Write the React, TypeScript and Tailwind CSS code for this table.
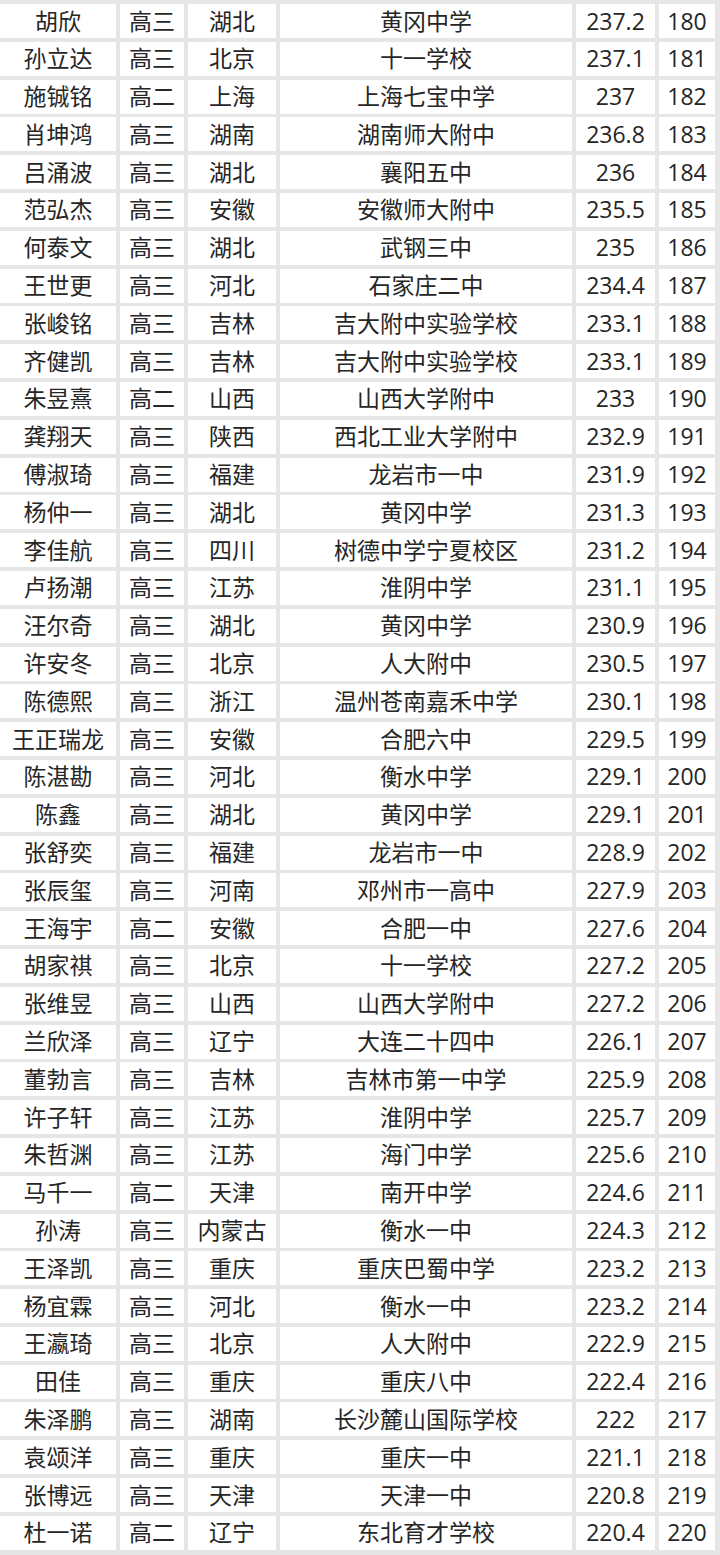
import React from 'react';

const rows: [string, string, string, string, string, number][] = [
  ['胡欣', '高三', '湖北', '黄冈中学', '237.2', 180],
  ['孙立达', '高三', '北京', '十一学校', '237.1', 181],
  ['施铖铭', '高二', '上海', '上海七宝中学', '237', 182],
  ['肖坤鸿', '高三', '湖南', '湖南师大附中', '236.8', 183],
  ['吕涌波', '高三', '湖北', '襄阳五中', '236', 184],
  ['范弘杰', '高三', '安徽', '安徽师大附中', '235.5', 185],
  ['何泰文', '高三', '湖北', '武钢三中', '235', 186],
  ['王世更', '高三', '河北', '石家庄二中', '234.4', 187],
  ['张峻铭', '高三', '吉林', '吉大附中实验学校', '233.1', 188],
  ['齐健凯', '高三', '吉林', '吉大附中实验学校', '233.1', 189],
  ['朱昱熹', '高二', '山西', '山西大学附中', '233', 190],
  ['龚翔天', '高三', '陕西', '西北工业大学附中', '232.9', 191],
  ['傅淑琦', '高三', '福建', '龙岩市一中', '231.9', 192],
  ['杨仲一', '高三', '湖北', '黄冈中学', '231.3', 193],
  ['李佳航', '高三', '四川', '树德中学宁夏校区', '231.2', 194],
  ['卢扬潮', '高三', '江苏', '淮阴中学', '231.1', 195],
  ['汪尔奇', '高三', '湖北', '黄冈中学', '230.9', 196],
  ['许安冬', '高三', '北京', '人大附中', '230.5', 197],
  ['陈德熙', '高三', '浙江', '温州苍南嘉禾中学', '230.1', 198],
  ['王正瑞龙', '高三', '安徽', '合肥六中', '229.5', 199],
  ['陈湛勘', '高三', '河北', '衡水中学', '229.1', 200],
  ['陈鑫', '高三', '湖北', '黄冈中学', '229.1', 201],
  ['张舒奕', '高三', '福建', '龙岩市一中', '228.9', 202],
  ['张辰玺', '高三', '河南', '邓州市一高中', '227.9', 203],
  ['王海宇', '高二', '安徽', '合肥一中', '227.6', 204],
  ['胡家祺', '高三', '北京', '十一学校', '227.2', 205],
  ['张维昱', '高三', '山西', '山西大学附中', '227.2', 206],
  ['兰欣泽', '高三', '辽宁', '大连二十四中', '226.1', 207],
  ['董勃言', '高三', '吉林', '吉林市第一中学', '225.9', 208],
  ['许子轩', '高三', '江苏', '淮阴中学', '225.7', 209],
  ['朱哲渊', '高三', '江苏', '海门中学', '225.6', 210],
  ['马千一', '高二', '天津', '南开中学', '224.6', 211],
  ['孙涛', '高三', '内蒙古', '衡水一中', '224.3', 212],
  ['王泽凯', '高三', '重庆', '重庆巴蜀中学', '223.2', 213],
  ['杨宜霖', '高三', '河北', '衡水一中', '223.2', 214],
  ['王瀛琦', '高三', '北京', '人大附中', '222.9', 215],
  ['田佳', '高三', '重庆', '重庆八中', '222.4', 216],
  ['朱泽鹏', '高三', '湖南', '长沙麓山国际学校', '222', 217],
  ['袁颂洋', '高三', '重庆', '重庆一中', '221.1', 218],
  ['张博远', '高三', '天津', '天津一中', '220.8', 219],
  ['杜一诺', '高二', '辽宁', '东北育才学校', '220.4', 220],
];

const cell =
  "h-[34px] bg-white flex items-center justify-center text-[23px] leading-none text-[#262626]";

export default function App() {
  return (
    <div
      className="w-[720px] h-[1555px] bg-[#e6e6e6] pt-[4px] pr-[5px] overflow-hidden"
      style={{ fontFamily: '"Open Sans", "Noto Sans CJK SC", sans-serif' }}
    >
      <div className="grid grid-cols-[116px_64px_88px_292px_79px_56px] gap-x-[4px] gap-y-[3.8px]">
        {rows.map(([name, grade, prov, school, score, rank]) => (
          <React.Fragment key={rank}>
            <div className={cell}>{name}</div>
            <div className={cell}>{grade}</div>
            <div className={cell}>{prov}</div>
            <div className={cell}>{school}</div>
            <div className={cell}>{score}</div>
            <div className={cell}>{rank}</div>
          </React.Fragment>
        ))}
      </div>
    </div>
  );
}
